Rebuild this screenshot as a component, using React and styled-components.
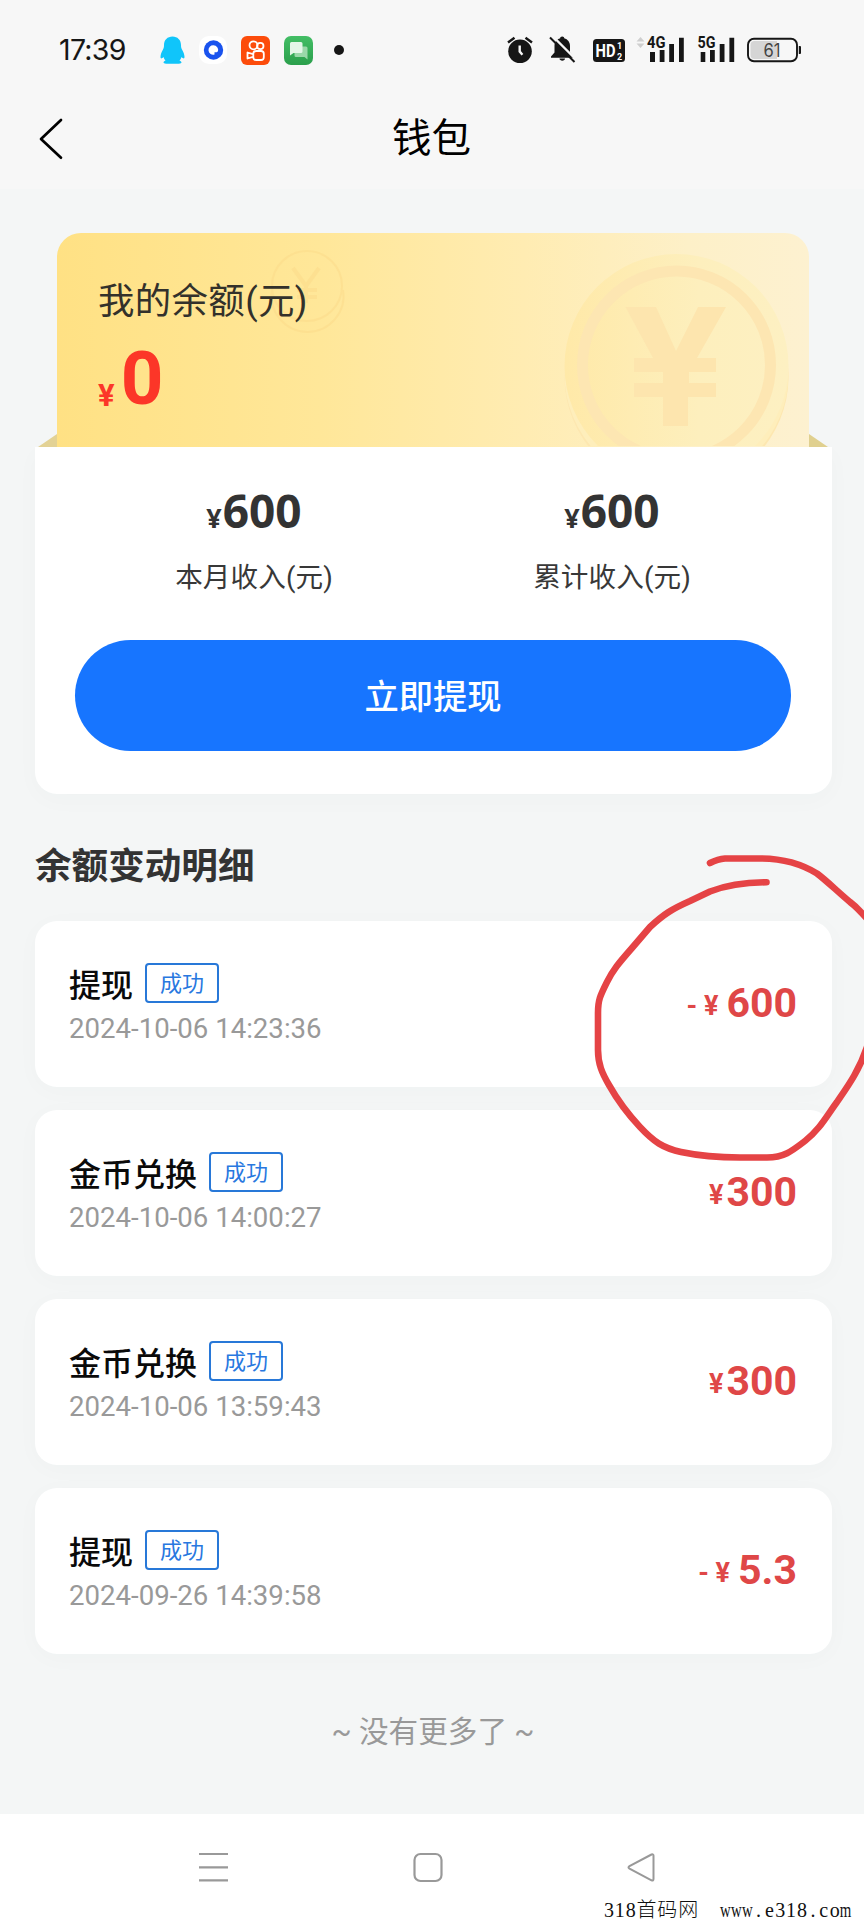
import styled, { createGlobalStyle } from 'styled-components';

const GlobalStyle = createGlobalStyle`
  * {
    box-sizing: border-box;
  }

  body {
    margin: 0;
    background: #f4f6f6;
    font-family: Roboto, 'Noto Sans CJK SC', sans-serif;
  }

  p, h1, h2 {
    margin: 0;
  }

  svg {
    display: block;
    flex-shrink: 0;
  }
`;

const Screen = styled.div`
  position: relative;
  display: flex;
  flex-direction: column;
  width: 864px;
  height: 1920px;
  overflow: hidden;
`;

const Top = styled.header`
  height: 189px;
  background: #f7f7f7;
`;

const StatusBar = styled.div`
  display: flex;
  align-items: center;
  justify-content: space-between;
  height: 100px;
  padding: 0 62px 0 59px;
`;

const StatusGroup = styled.div`
  display: flex;
  align-items: center;
  gap: ${(props) => props.$gap}px;
`;

const Time = styled.span`
  width: 87px;
  font-family: Inter, sans-serif;
  font-size: 28.5px;
  letter-spacing: -0.7px;
  line-height: 40px;
  color: #161616;
`;

const TitleBar = styled.div`
  display: grid;
  grid-template-columns: 100px 1fr 100px;
  align-items: center;
  height: 78px;
  padding: 0 36px 0 35px;
`;

const PageTitle = styled.h1`
  font-size: 39.5px;
  font-weight: 400;
  line-height: 60px;
  text-align: center;
  color: #000;
`;

const Content = styled.main`
  flex: 1;
  padding: 44px 32px 0 35px;
`;

const Balance = styled.section`
  position: relative;
  width: 752px;
  height: 213.5px;
  margin-left: 22px;
  padding: 44px 41px 0;
  border-radius: 24px 24px 0 0;
  background: linear-gradient(90deg, #ffe184 0%, #ffe799 35%, #ffecb2 62%, #fdf0c8 84%, #fdf1d0 100%);
`;

const Fold = styled.svg`
  position: absolute;
  bottom: 0;
  ${(props) => (props.$right ? 'right: -19px;' : 'left: -19px;')}
`;

const Coins = styled.svg`
  position: absolute;
  inset: 0;
`;

const BalanceLabel = styled.p`
  position: relative;
  font-size: 36.4px;
  line-height: 50px;
  letter-spacing: 0.4px;
  color: #33312b;
`;

const BalanceValue = styled.p`
  position: relative;
  display: flex;
  align-items: baseline;
  gap: 6px;
  margin-top: 7px;
  font-size: 74.5px;
  font-weight: 700;
  line-height: 90px;
  color: #fc3628;
`;

const BalanceSign = styled.span`
  font-size: 31px;
  position: relative;
  top: 2px;
`;

const Summary = styled.section`
  width: 797px;
  height: 347.5px;
  padding: 33.5px 41px 0 40px;
  border-radius: 0 0 22px 22px;
  background: #fff;
  box-shadow: 0 6px 24px rgba(60, 70, 70, 0.025);
`;

const Incomes = styled.div`
  display: grid;
  grid-template-columns: 1fr 1fr;
  height: 160px;
`;

const Income = styled.div`
  display: flex;
  flex-direction: column;
  align-items: center;
`;

const IncomeValue = styled.p`
  display: flex;
  align-items: baseline;
  font-family: 'Noto Sans', sans-serif;
  font-size: 46px;
  font-weight: 700;
  line-height: 60px;
  color: #333;
`;

const IncomeSign = styled.span`
  margin-right: 1px;
  font-size: 27px;
`;

const IncomeLabel = styled.p`
  margin-top: 10px;
  font-size: 27.6px;
  line-height: 40px;
  letter-spacing: 0.1px;
  color: #383838;
`;

const WithdrawButton = styled.button`
  display: block;
  width: 716px;
  height: 111px;
  padding: 3px 0 0 0;
  border: 0;
  border-radius: 56px;
  background: #1775ff;
  color: #fff;
  font-family: inherit;
  font-size: 34.3px;
  font-weight: 500;
  line-height: 108px;
`;

const SectionTitle = styled.h2`
  margin: 46px 0 27px;
  font-size: 36.6px;
  font-weight: 700;
  line-height: 54px;
  color: #333;
`;

const List = styled.div`
  display: flex;
  flex-direction: column;
  gap: 23.5px;
`;

const Item = styled.article`
  display: flex;
  align-items: center;
  justify-content: space-between;
  width: 797px;
  height: 165.5px;
  padding: 4px 35px 0 34px;
  border-radius: 22px;
  background: #fff;
  box-shadow: 0 4px 24px rgba(60, 70, 70, 0.025);
`;

const ItemHead = styled.div`
  display: flex;
  align-items: center;
  gap: 12px;
  height: 42px;
  margin-top: -1px;
`;

const ItemTitle = styled.span`
  padding-top: 5px;
  font-size: 32px;
  font-weight: 500;
  line-height: 42px;
  color: #0a0a0a;
`;

const Badge = styled.span`
  width: 74px;
  height: 40px;
  border: 2px solid #2878d8;
  border-radius: 4px;
  font-size: 22px;
  line-height: 38px;
  text-align: center;
  color: #2878e0;
`;

const ItemTime = styled.p`
  margin-top: 6px;
  font-size: 27.6px;
  line-height: 38px;
  color: #999;
`;

const Amount = styled.p`
  display: flex;
  align-items: baseline;
  font-size: 41px;
  font-weight: 700;
  line-height: 50px;
  color: #df4747;
`;

const AmountSign = styled.span`
  position: relative;
  top: -2px;
  margin-right: ${(props) => (props.$spaced ? 8 : 3)}px;
  font-size: 27px;
  white-space: pre;
`;

const NoMore = styled.p`
  margin-top: 56px;
  padding-right: 1px;
  font-size: 29.6px;
  line-height: 44px;
  text-align: center;
  color: #999;
`;

const NavBar = styled.nav`
  height: 106px;
  padding: 37px 208px 0 198px;
  background: #fff;
`;

const NavIcons = styled.div`
  display: flex;
  justify-content: space-between;
`;

const SiteMark = styled.div`
  position: absolute;
  right: 13px;
  bottom: -1px;
  display: flex;
  font-family: 'Liberation Serif', 'Noto Sans CJK SC', serif;
  font-size: 20px;
  font-weight: 300;
  line-height: 22px;
  color: #111;
`;

const Cell = styled.span`
  display: flex;
  justify-content: center;
  width: ${(props) => (props.$wide ? 20.8 : 10.9)}px;
  transform: scaleX(${(props) => (props.$squeeze ? 0.74 : 1)});
`;

const Scribble = styled.svg`
  position: absolute;
  left: 590px;
  top: 850px;
`;

const records = [
  { title: '提现', time: '2024-10-06 14:23:36', amount: '600', out: true },
  { title: '金币兑换', time: '2024-10-06 14:00:27', amount: '300' },
  { title: '金币兑换', time: '2024-10-06 13:59:43', amount: '300' },
  { title: '提现', time: '2024-09-26 14:39:58', amount: '5.3', out: true },
];

const QQIcon = () => (
  <svg width="25" height="28" viewBox="0 0 25 28" fill="#10c5fa">
    <path d="M12.5 0.5C7.5 0.5 4 4 4 9c0 2-.3 3.300-1 4.500C1.500 16 .5 18.500.5 21c0 1.800 1 2 3 0 .5 1.500 1 2.500 2 3.500-1.300.6-2 1.200-2 2 0 1 2 1.200 4.500 1.200h9c2.500 0 4.500-.2 4.500-1.200 0-.8-.7-1.400-2-2 1-1 1.500-2 2-3.500 2 2 3 1.800 3 0 0-2.500-1-5-2.500-7.500-.7-1.200-1-2.500-1-4.500 0-5-3.500-8.500-8.500-8.500z" />
  </svg>
);

const RingIcon = () => (
  <svg width="28" height="28" viewBox="0 0 28 28">
    <rect width="28" height="28" rx="10" fill="#fff" />
    <circle cx="14.500" cy="14" r="9.700" fill="#1a53ee" />
    <path d="M14.500 9.300a4.700 4.700 0 1 0 1 9.200v-2.200h2.200l1.300-1A4.700 4.700 0 0 0 14.500 9.300z" fill="#fff" />
  </svg>
);

const KuaishouIcon = () => (
  <svg width="29" height="29" viewBox="0 0 29 29" fill="none" stroke="#fff" strokeWidth="1.800">
    <rect width="29" height="29" rx="6" fill="#fc4c0b" stroke="none" />
    <circle cx="12.500" cy="9.300" r="4" />
    <circle cx="19.300" cy="10" r="3.200" />
    <rect x="12.300" y="15" width="10.500" height="9" rx="2.800" />
    <path d="M12 18.200 6.500 16.500v6l5.500-1.700" strokeLinejoin="round" />
  </svg>
);

const MessageIcon = () => (
  <svg width="29" height="29" viewBox="0 0 29 29">
    <defs>
      <linearGradient id="msg" x1="0" y1="0" x2="0" y2="1">
        <stop offset="0" stopColor="#43be65" />
        <stop offset="1" stopColor="#2b9f4c" />
      </linearGradient>
    </defs>
    <rect width="29" height="29" rx="7" fill="url(#msg)" />
    <path d="M12 10.500h10a1.500 1.500 0 0 1 1.500 1.500v11.500L20.500 21H12a1.500 1.500 0 0 1-1.500-1.500V12z" fill="#9ad8a9" />
    <path d="M7.500 6H17a1.500 1.500 0 0 1 1.500 1.500v8A1.500 1.500 0 0 1 17 17H9.500L6 19.500v-12A1.500 1.500 0 0 1 7.500 6z" fill="#e4f6e8" />
  </svg>
);

const DotIcon = () => (
  <svg width="18" height="10" viewBox="0 0 18 10">
    <circle cx="13" cy="5" r="5" fill="#161616" />
  </svg>
);

// alarm, mute bell, HD, both signal meters and the battery
const SystemIcons = () => (
  <svg width="296" height="50" viewBox="506 25 296 50" fill="#161616">
    <circle cx="520" cy="51.300" r="11.800" />
    <path d="M508 42.500l6.500-4.800M532 42.500l-6.500-4.800" stroke="#161616" strokeWidth="2.400" />
    <path d="M519.700 45.500v6l2.700 3.300" fill="none" stroke="#f7f7f7" strokeWidth="2.400" />

    <path d="M562.200 36.500c1.300 0 2 .8 2 1.800 3.600 1 5.800 4 5.800 7.700v6.500l3.500 4v1.300H551v-1.300l3.500-4V46c0-3.700 2.200-6.700 5.700-7.700 0-1 .7-1.800 2-1.800zM559.500 58.500h5.500c0 1.300-1.200 2.200-2.700 2.200s-2.800-.9-2.800-2.200z" />
    <path d="M552 35.500l25 25" stroke="#f7f7f7" strokeWidth="2.400" />
    <path d="M550 37.500l24.500 24.500" stroke="#161616" strokeWidth="2" />

    <rect x="593" y="39" width="32" height="23" rx="3.500" />
    <g fill="#fff" fontFamily="Roboto, sans-serif" fontWeight="700">
      <text x="595.500" y="57" fontSize="18.500" textLength="20" lengthAdjust="spacingAndGlyphs">HD</text>
      <text x="617" y="49.300" fontSize="9">1</text>
      <text x="617" y="59.700" fontSize="9">2</text>
    </g>

    <path d="M636.500 41.500l4-4.500 4 4.500zM636.500 43.500l4 4.500 4-4.500z" fill="#cfcfcf" />
    <g fontFamily="Roboto, sans-serif" fontWeight="700" fontSize="16">
      <text x="647" y="48" textLength="18.500" lengthAdjust="spacingAndGlyphs">4G</text>
      <text x="697.500" y="48" textLength="18" lengthAdjust="spacingAndGlyphs">5G</text>
    </g>
    <path d="M650 52h5v10h-5zM659.700 50h4.800v12h-4.800zM669.200 44h4.800v18h-4.800zM679 37.700h4.800V62H679z" />
    <path d="M700.700 52h4.600v10h-4.600zM710 50h4.800v12H710zM719.700 44h4.800v18h-4.800zM729.400 37.700h4.800V62h-4.800z" />

    <rect x="748" y="38.700" width="49" height="22.600" rx="6" fill="none" stroke="#161616" strokeWidth="1.900" />
    <path d="M754.500 41h22.500v18h-22.500a4 4 0 0 1-4-4V45a4 4 0 0 1 4-4z" fill="#d5d5d5" />
    <path d="M798.800 46h1.200a1 1 0 0 1 1 1v6a1 1 0 0 1-1 1h-1.200z" />
    <text x="763.500" y="56.800" fontFamily="Inter, sans-serif" fontSize="18" textLength="17" lengthAdjust="spacingAndGlyphs" fill="#444">61</text>
  </svg>
);

const BackIcon = () => (
  <svg width="30" height="44" viewBox="0 0 30 44" fill="none" stroke="#000" strokeWidth="2.700" strokeLinecap="round" strokeLinejoin="round">
    <path d="M26 3 6 22l20 18.700" />
  </svg>
);

const CoinPattern = () => (
  <Coins width="752" height="213" viewBox="57 233 752 213">
    <defs>
      <linearGradient id="coin" x1="0" y1="0" x2="1" y2="0">
        <stop offset="0" stopColor="#ffe9a8" />
        <stop offset="0.600" stopColor="#fdefbd" />
        <stop offset="1" stopColor="#fdf0c2" />
      </linearGradient>
    </defs>
    <g fill="none" stroke="#fbd988" opacity="0.450">
      <circle cx="307" cy="286" r="35" strokeWidth="2" />
      <path d="M272 290a36 36 0 1 0 71 0" strokeWidth="2" />
      <path d="M293 268l13 18 13-18M306 286v17M297 290h20M297 297h20" strokeWidth="4" />
    </g>
    <circle cx="676.500" cy="377" r="112" fill="#fde7b0" />
    <circle cx="676.500" cy="374" r="112" fill="#feeebb" />
    <circle cx="676.500" cy="366" r="112" fill="url(#coin)" />
    <circle cx="676.500" cy="365" r="94" fill="none" stroke="#fde6b2" strokeWidth="11" />
    <path
      d="M625.500 307H656l20 44 22-44h28l-29 51h19v14h-27v11h27v14h-28v29h-25v-29h-29v-14h29v-11h-29v-14h19z"
      fill="#fde5ae"
    />
  </Coins>
);

const App = () => (
  <>
    <GlobalStyle />
    <Screen>
      <Top>
        <StatusBar>
          <StatusGroup $gap={13.9}>
            <Time>17:39</Time>
            <QQIcon />
            <RingIcon />
            <KuaishouIcon />
            <MessageIcon />
            <DotIcon />
          </StatusGroup>
          <SystemIcons />
        </StatusBar>
        <TitleBar>
          <BackIcon />
          <PageTitle>钱包</PageTitle>
        </TitleBar>
      </Top>

      <Content>
        <Balance>
          <Fold width="19" height="13" viewBox="0 0 19 13" fill="#e3d295">
            <path d="M0 13 19 0v13z" />
          </Fold>
          <Fold $right width="19" height="13" viewBox="0 0 19 13" fill="#e0d08f">
            <path d="M19 13 0 0v13z" />
          </Fold>
          <CoinPattern />
          <BalanceLabel>我的余额(元)</BalanceLabel>
          <BalanceValue>
            <BalanceSign>¥</BalanceSign>0
          </BalanceValue>
        </Balance>

        <Summary>
          <Incomes>
            <Income>
              <IncomeValue>
                <IncomeSign>¥</IncomeSign>600
              </IncomeValue>
              <IncomeLabel>本月收入(元)</IncomeLabel>
            </Income>
            <Income>
              <IncomeValue>
                <IncomeSign>¥</IncomeSign>600
              </IncomeValue>
              <IncomeLabel>累计收入(元)</IncomeLabel>
            </Income>
          </Incomes>
          <WithdrawButton>立即提现</WithdrawButton>
        </Summary>

        <SectionTitle>余额变动明细</SectionTitle>
        <List>
          {records.map((record) => (
            <Item key={record.time}>
              <div>
                <ItemHead>
                  <ItemTitle>{record.title}</ItemTitle>
                  <Badge>成功</Badge>
                </ItemHead>
                <ItemTime>{record.time}</ItemTime>
              </div>
              <Amount>
                <AmountSign $spaced={record.out}>{record.out ? '- ¥' : '¥'}</AmountSign>
                {record.amount}
              </Amount>
            </Item>
          ))}
        </List>
        <NoMore>~ 没有更多了 ~</NoMore>
      </Content>

      <NavBar>
        <NavIcons>
          <svg width="31" height="32" viewBox="0 0 31 32" stroke="#999" strokeWidth="2.200">
            <path d="M1 3h29M1 16.300h29M1 29.300h29" />
          </svg>
          <svg width="31" height="32" viewBox="0 0 31 32" fill="none" stroke="#999" strokeWidth="2.200">
            <rect x="2.500" y="3" width="27" height="27" rx="6" />
          </svg>
          <svg width="31" height="32" viewBox="0 0 31 32" fill="none" stroke="#999" strokeWidth="2">
            <path d="M26.500 3.500 4.500 15.200q-2 1.300 0 2.500l22 11.600q2 .7 2-1.300V4.800q0-2-2-1.300z" />
          </svg>
        </NavIcons>
      </NavBar>

      <SiteMark>
        {[...'318首码网\u00a0\u00a0www.e318.com'].map((char, index) => (
          <Cell key={index} $wide={'首码网'.includes(char)} $squeeze={'wm'.includes(char)}>
            {char}
          </Cell>
        ))}
      </SiteMark>

      <Scribble width="274" height="320" viewBox="590 850 274 320" fill="none" stroke="#e54345" strokeWidth="6.600" strokeLinecap="round" strokeLinejoin="round">
        <path d="M710 863Q718 859 725 858.500L760 858.500C783 858.500 800 863 817 873.500C827 881 838 892 850 902Q858 908 868 920" />
        <path d="M766.500 882.300C744 882.300 727 885 710 891.500L690 901C672 909 664 914 650 927L632 948C618 964 613 970 607 982C600 996 598 1000 598 1013L598 1050C598 1064 602 1073 609 1085C618 1101 626 1112 640 1127C654 1142 663 1148 681 1152C700 1156 715 1157.500 740 1157.500L767 1157.500C784 1157.500 792 1151 805 1141C820 1129 826 1117 837 1102C848 1086 859 1071 867 1047" />
      </Scribble>
    </Screen>
  </>
);

export default App;
